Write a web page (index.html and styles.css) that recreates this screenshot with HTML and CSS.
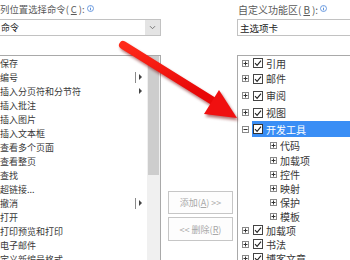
FILE: index.html
```html
<!DOCTYPE html>
<html>
<head>
<meta charset="utf-8">
<link rel="stylesheet" href="styles.css">
</head>
<body>
<div class="dialog">
  <div class="col left">
    <div class="label">列位置选择命令(<u>C</u>):<svg class="info" width="7" height="7" viewBox="0 0 7 7"><circle cx="3.5" cy="3.5" r="3" fill="none" stroke="#4d87d8" stroke-width="0.8"/><path d="M3.5 3v2.3M3.5 1.7v0.6" stroke="#4d87d8" stroke-width="0.9"/></svg></div>
    <div class="select"><span class="select-text">命令</span><span class="select-btn"><svg width="7" height="5" viewBox="0 0 7 5"><path d="M1 1.2l2.5 2.5 2.5-2.5" fill="none" stroke="#777" stroke-width="1"/></svg></span></div>
    <div class="listbox">
      <ul class="items">
        <li>保存</li>
        <li>编号<span class="more"><span class="sep"></span><span class="tri"></span></span></li>
        <li>插入分页符和分节符<span class="more"><span class="tri"></span></span></li>
        <li>插入批注</li>
        <li>插入图片</li>
        <li>插入文本框</li>
        <li>查看多个页面</li>
        <li>查看整页</li>
        <li>查找</li>
        <li>超链接...</li>
        <li>撤消<span class="more"><span class="sep"></span><span class="tri"></span></span></li>
        <li>打开</li>
        <li>打印预览和打印</li>
        <li>电子邮件</li>
        <li>定义新编号格式...</li>
      </ul>
      <div class="scrollbar"><div class="thumb"></div></div>
    </div>
  </div>
  <div class="col middle">
    <button class="btn">添加(<u>A</u>) &gt;&gt;</button>
    <button class="btn btn2">&lt;&lt; 删除(<u>R</u>)</button>
  </div>
  <div class="col right">
    <div class="label rlabel">自定义功能区(<u>B</u>):<svg class="info" width="7" height="7" viewBox="0 0 7 7"><circle cx="3.5" cy="3.5" r="3" fill="none" stroke="#4d87d8" stroke-width="0.8"/><path d="M3.5 3v2.3M3.5 1.7v0.6" stroke="#4d87d8" stroke-width="0.9"/></svg></div>
    <div class="select rselect"><span class="select-text">主选项卡</span></div>
    <div class="tree">
      <div class="row r14"><svg class="exp" width="7" height="7" viewBox="0 0 7 7"><rect x=".5" y=".5" width="6" height="6" fill="#fff" stroke="#8a8a8a"/><path d="M1.5 3.5h4M3.5 1.5v4" stroke="#333"/></svg><span class="cell"><svg class="cb" width="10" height="10" viewBox="0 0 10 10"><rect x=".5" y=".5" width="9" height="9" fill="#fff" stroke="#444"/><path d="M2 5.2l2.1 2.2L8 2.6" fill="none" stroke="#222" stroke-width="1.1"/></svg>引用</span></div>
      <div class="row r17"><svg class="exp" width="7" height="7" viewBox="0 0 7 7"><rect x=".5" y=".5" width="6" height="6" fill="#fff" stroke="#8a8a8a"/><path d="M1.5 3.5h4M3.5 1.5v4" stroke="#333"/></svg><span class="cell"><svg class="cb" width="10" height="10" viewBox="0 0 10 10"><rect x=".5" y=".5" width="9" height="9" fill="#fff" stroke="#444"/><path d="M2 5.2l2.1 2.2L8 2.6" fill="none" stroke="#222" stroke-width="1.1"/></svg>邮件</span></div>
      <div class="row r17"><svg class="exp" width="7" height="7" viewBox="0 0 7 7"><rect x=".5" y=".5" width="6" height="6" fill="#fff" stroke="#8a8a8a"/><path d="M1.5 3.5h4M3.5 1.5v4" stroke="#333"/></svg><span class="cell"><svg class="cb" width="10" height="10" viewBox="0 0 10 10"><rect x=".5" y=".5" width="9" height="9" fill="#fff" stroke="#444"/><path d="M2 5.2l2.1 2.2L8 2.6" fill="none" stroke="#222" stroke-width="1.1"/></svg>审阅</span></div>
      <div class="row r17"><svg class="exp" width="7" height="7" viewBox="0 0 7 7"><rect x=".5" y=".5" width="6" height="6" fill="#fff" stroke="#8a8a8a"/><path d="M1.5 3.5h4M3.5 1.5v4" stroke="#333"/></svg><span class="cell"><svg class="cb" width="10" height="10" viewBox="0 0 10 10"><rect x=".5" y=".5" width="9" height="9" fill="#fff" stroke="#444"/><path d="M2 5.2l2.1 2.2L8 2.6" fill="none" stroke="#222" stroke-width="1.1"/></svg>视图</span></div>
      <div class="row r16"><svg class="exp" width="7" height="7" viewBox="0 0 7 7"><rect x=".5" y=".5" width="6" height="6" fill="#fff" stroke="#8a8a8a"/><path d="M1.5 3.5h4" stroke="#333"/></svg><span class="cell selected"><svg class="cb" width="10" height="10" viewBox="0 0 10 10"><rect x=".5" y=".5" width="9" height="9" fill="#fff" stroke="#333"/><path d="M2 5.2l2.1 2.2L8 2.6" fill="none" stroke="#222" stroke-width="1.1"/></svg>开发工具</span></div>
      <div class="row r16 child"><svg class="exp" width="7" height="7" viewBox="0 0 7 7"><rect x=".5" y=".5" width="6" height="6" fill="#fff" stroke="#8a8a8a"/><path d="M1.5 3.5h4M3.5 1.5v4" stroke="#333"/></svg><span class="cell">代码</span></div>
      <div class="row child"><svg class="exp" width="7" height="7" viewBox="0 0 7 7"><rect x=".5" y=".5" width="6" height="6" fill="#fff" stroke="#8a8a8a"/><path d="M1.5 3.5h4M3.5 1.5v4" stroke="#333"/></svg><span class="cell">加载项</span></div>
      <div class="row child"><svg class="exp" width="7" height="7" viewBox="0 0 7 7"><rect x=".5" y=".5" width="6" height="6" fill="#fff" stroke="#8a8a8a"/><path d="M1.5 3.5h4M3.5 1.5v4" stroke="#333"/></svg><span class="cell">控件</span></div>
      <div class="row child"><svg class="exp" width="7" height="7" viewBox="0 0 7 7"><rect x=".5" y=".5" width="6" height="6" fill="#fff" stroke="#8a8a8a"/><path d="M1.5 3.5h4M3.5 1.5v4" stroke="#333"/></svg><span class="cell">映射</span></div>
      <div class="row child"><svg class="exp" width="7" height="7" viewBox="0 0 7 7"><rect x=".5" y=".5" width="6" height="6" fill="#fff" stroke="#8a8a8a"/><path d="M1.5 3.5h4M3.5 1.5v4" stroke="#333"/></svg><span class="cell">保护</span></div>
      <div class="row child"><svg class="exp" width="7" height="7" viewBox="0 0 7 7"><rect x=".5" y=".5" width="6" height="6" fill="#fff" stroke="#8a8a8a"/><path d="M1.5 3.5h4M3.5 1.5v4" stroke="#333"/></svg><span class="cell">模板</span></div>
      <div class="row"><svg class="exp" width="7" height="7" viewBox="0 0 7 7"><rect x=".5" y=".5" width="6" height="6" fill="#fff" stroke="#8a8a8a"/><path d="M1.5 3.5h4M3.5 1.5v4" stroke="#333"/></svg><span class="cell"><svg class="cb" width="10" height="10" viewBox="0 0 10 10"><rect x=".5" y=".5" width="9" height="9" fill="#fff" stroke="#444"/><path d="M2 5.2l2.1 2.2L8 2.6" fill="none" stroke="#222" stroke-width="1.1"/></svg>加载项</span></div>
      <div class="row"><svg class="exp" width="7" height="7" viewBox="0 0 7 7"><rect x=".5" y=".5" width="6" height="6" fill="#fff" stroke="#8a8a8a"/><path d="M1.5 3.5h4M3.5 1.5v4" stroke="#333"/></svg><span class="cell"><svg class="cb" width="10" height="10" viewBox="0 0 10 10"><rect x=".5" y=".5" width="9" height="9" fill="#fff" stroke="#444"/><path d="M2 5.2l2.1 2.2L8 2.6" fill="none" stroke="#222" stroke-width="1.1"/></svg>书法</span></div>
      <div class="row"><svg class="exp" width="7" height="7" viewBox="0 0 7 7"><rect x=".5" y=".5" width="6" height="6" fill="#fff" stroke="#8a8a8a"/><path d="M1.5 3.5h4M3.5 1.5v4" stroke="#333"/></svg><span class="cell"><svg class="cb" width="10" height="10" viewBox="0 0 10 10"><rect x=".5" y=".5" width="9" height="9" fill="#fff" stroke="#444"/><path d="M2 5.2l2.1 2.2L8 2.6" fill="none" stroke="#222" stroke-width="1.1"/></svg>博客文章</span></div>
    </div>
  </div>
  <svg class="arrow" width="350" height="260" viewBox="0 0 350 260">
    <defs>
      <filter id="sh" x="-20%" y="-20%" width="140%" height="140%">
        <feGaussianBlur stdDeviation="1.6"/>
      </filter>
      <linearGradient id="rg" x1="0" y1="0" x2="0.3" y2="1">
        <stop offset="0" stop-color="#ff2a1a"/>
        <stop offset="1" stop-color="#e80808"/>
      </linearGradient>
    </defs>
    <g transform="translate(1.5,2.5)" filter="url(#sh)" opacity="0.55">
      <line x1="123" y1="45" x2="213" y2="101" stroke="#700" stroke-width="8" stroke-linecap="round"/>
      <polygon points="237,118 219,90 204,114" fill="#700"/>
    </g>
    <line x1="123" y1="45" x2="213" y2="101" stroke="url(#rg)" stroke-width="8" stroke-linecap="round"/>
    <polygon points="237,118 219,90 204,114" fill="#f01010"/>
  </svg>
</div>
</body>
</html>
```
FILE: styles.css
```css
html, body {
  margin: 0;
  padding: 0;
  background: #fff;
}
body {
  width: 350px;
  height: 260px;
  overflow: hidden;
  font-family: "Noto Sans CJK SC", "Microsoft YaHei", sans-serif;
  font-size: 9px;
  color: #383838;
}
.dialog {
  position: relative;
  display: flex;
  width: 350px;
  height: 260px;
  overflow: hidden;
}
.col {
  flex: none;
  display: flex;
  flex-direction: column;
}
.left {
  width: 161px;
}
.middle {
  width: 76px;
  padding: 191px 0 0 7px;
  box-sizing: border-box;
}
.right {
  width: 140px;
}
.label {
  height: 18px;
  display: flex;
  align-items: center;
  gap: 2px;
  white-space: nowrap;
  color: #5a5a5a;
  font-size: 9.4px;
}
.label u {
  text-decoration-thickness: 1px;
}
.rlabel {
  padding-left: 1px;
  font-size: 10px;
}
.info {
  flex: none;
  margin-top: -1px;
}
.select {
  height: 17px;
  margin-top: 1px;
  margin-left: -1px;
  box-sizing: border-box;
  border: 1px solid #c2c2c2;
  display: flex;
  align-items: center;
  background: #fff;
}
.select-text {
  padding-left: 1px;
  color: #222;
}
.rselect {
  margin-left: 0;
}
.rselect .select-text {
  padding-left: 2px;
  font-size: 9.5px;
}
.select-btn {
  margin-left: auto;
  width: 15px;
  height: 100%;
  background: #e4e4e4;
  display: flex;
  align-items: center;
  justify-content: center;
}
.listbox {
  margin-top: 19px;
  margin-left: -1px;
  flex: 1;
  border: 1px solid #a9a9a9;
  border-bottom: none;
  display: flex;
  min-height: 0;
}
.items {
  flex: 1;
  list-style: none;
  margin: 0;
  padding: 0;
  overflow: hidden;
}
.items li {
  height: 14px;
  display: flex;
  align-items: center;
  white-space: nowrap;
}
.more {
  margin-left: auto;
  margin-right: 5px;
  display: flex;
  align-items: center;
  gap: 3px;
}
.sep {
  width: 1px;
  height: 11px;
  background: #8a8a8a;
}
.tri {
  width: 0;
  height: 0;
  border-top: 3px solid transparent;
  border-bottom: 3px solid transparent;
  border-left: 3px solid #444;
}
.scrollbar {
  width: 13px;
  flex: none;
  background: #f0f0f0;
}
.thumb {
  height: 119px;
  margin: 0 1px;
  background: #cdcdcd;
}
.btn {
  display: block;
  width: 65px;
  height: 23px;
  padding: 0;
  border: 1px solid #c6c6c6;
  background: #fdfdfd;
  color: #a8a8a8;
  font-family: "Noto Sans CJK SC", "Microsoft YaHei", sans-serif;
  font-size: 9px;
  white-space: nowrap;
}
.btn2 {
  margin-top: 3px;
  height: 24px;
}
.tree {
  margin-top: 19px;
  flex: 1;
  border-left: 1px solid #a9a9a9;
  border-top: 1px solid #a9a9a9;
  padding-left: 4px;
  overflow: hidden;
}
.row {
  height: 14px;
  display: flex;
  align-items: center;
  white-space: nowrap;
  font-size: 10px;
}
.r14 { height: 14px; }
.r16 { height: 16px; }
.r17 { height: 17px; }
.exp {
  flex: none;
  display: block;
}
.cell {
  margin-left: 3px;
  flex: 1;
  height: 100%;
  display: flex;
  align-items: center;
  padding-left: 1px;
}
.cb {
  flex: none;
  display: block;
  margin-right: 3px;
}
.selected {
  background: #3a8ef5;
  color: #fff;
}
.child {
  padding-left: 28px;
}
.child .cell {
  padding-left: 0;
}
.arrow {
  position: absolute;
  left: 0;
  top: 0;
  pointer-events: none;
}
```
